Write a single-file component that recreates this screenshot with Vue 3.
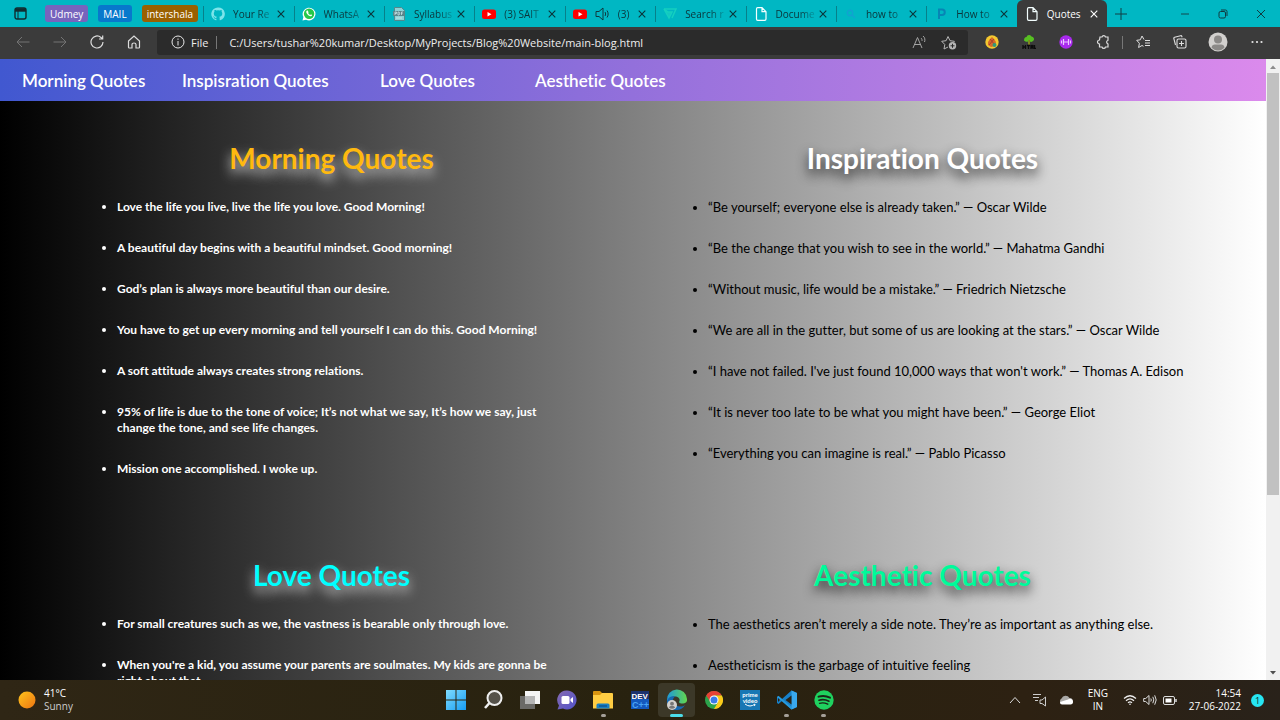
<script setup>
import { ref } from 'vue'

const tabs = [
  { icon: 'github', label: 'Your Re' },
  { icon: 'whatsapp', label: 'WhatsA' },
  { icon: 'pdf', label: 'Syllabus' },
  { icon: 'youtube', label: '(3) SAIT' },
  { icon: 'youtube', label: '(3)', sound: true },
  { icon: 'vee', label: 'Search r' },
  { icon: 'doc', label: 'Docume' },
  { icon: 'search', label: 'how to' },
  { icon: 'p', label: 'How to' },
  { icon: 'doc', label: 'Quotes', active: true }
]

const groups = [
  { label: 'Udmey', cls: 'violet' },
  { label: 'MAIL', cls: 'blue' },
  { label: 'intershala', cls: 'brown' }
]

const address = ref('C:/Users/tushar%20kumar/Desktop/MyProjects/Blog%20Website/main-blog.html')

const sections = [
  {
    id: 'morning', title: 'Morning Quotes', side: 'left',
    quotes: [
      'Love the life you live, live the life you love. Good Morning!',
      'A beautiful day begins with a beautiful mindset. Good morning!',
      'God’s plan is always more beautiful than our desire.',
      'You have to get up every morning and tell yourself I can do this. Good Morning!',
      'A soft attitude always creates strong relations.',
      '95% of life is due to the tone of voice; It’s not what we say, It’s how we say, just change the tone, and see life changes.',
      'Mission one accomplished. I woke up.'
    ]
  },
  {
    id: 'inspiration', title: 'Inspiration Quotes', side: 'right',
    quotes: [
      '“Be yourself; everyone else is already taken.” ― Oscar Wilde',
      '“Be the change that you wish to see in the world.” ― Mahatma Gandhi',
      '“Without music, life would be a mistake.” ― Friedrich Nietzsche',
      '“We are all in the gutter, but some of us are looking at the stars.” ― Oscar Wilde',
      "“I have not failed. I've just found 10,000 ways that won't work.” ― Thomas A. Edison",
      '“It is never too late to be what you might have been.” ― George Eliot',
      '“Everything you can imagine is real.” ― Pablo Picasso'
    ]
  },
  {
    id: 'love', title: 'Love Quotes', side: 'left',
    quotes: [
      'For small creatures such as we, the vastness is bearable only through love.',
      "When you're a kid, you assume your parents are soulmates. My kids are gonna be right about that."
    ]
  },
  {
    id: 'aesthetic', title: 'Aesthetic Quotes', side: 'right',
    quotes: [
      'The aesthetics aren’t merely a side note. They’re as important as anything else.',
      'Aestheticism is the garbage of intuitive feeling'
    ]
  }
]
</script>

<template>
  <div class="window">
    <header class="tabstrip">
      <button class="plain workspace" aria-label="Tab actions">
        <svg width="13" height="13" viewBox="0 0 13 13" fill="none" stroke="#102c30"><rect x="1" y="1" width="11" height="11" rx="2" stroke-width="1.4" /><path d="M1 3h11" stroke-width="3.4" /><path d="M4 4v8" stroke-width="1" /></svg>
      </button>
      <div class="groups">
        <button v-for="g in groups" :key="g.label" class="group" :class="g.cls">{{ g.label }}</button>
      </div>
      <div class="tabs">
        <div v-for="(t, i) in tabs" :key="i" class="tab" :class="{ active: t.active }">
          <button class="plain tab-main">
            <svg class="fav" viewBox="0 0 14 14" width="14" height="14" fill="none">
              <path v-if="t.icon === 'github'" fill="#7de4ea" d="M7 .4a6.6 6.6 0 0 0-2.1 12.9c.4 0 .5-.2.5-.4v-1.2c-1.8.4-2.2-.8-2.2-.8-.3-.8-.8-1-.8-1-.6-.4 0-.4 0-.4.7 0 1 .7 1 .7.6 1 1.600.7 2 .5 0-.4.2-.7.400-.9-1.500-.2-3-.7-3-3.300 0-.7.3-1.300.700-1.800-.1-.2-.3-.9.1-1.800 0 0 .5-.2 1.800.7a6 6 0 0 1 3.300 0c1.200-.9 1.800-.7 1.800-.7.4.9.100 1.600.1 1.800.4.500.7 1.100.7 1.800 0 2.600-1.600 3.100-3 3.300.200.200.400.600.400 1.200v1.900c0 .2.100.4.500.400A6.600 6.600 0 0 0 7 .4z" />
              <template v-else-if="t.icon === 'whatsapp'">
                <path d="M.5 13.500l.900-3.400A6.400 6.400 0 1 1 4 12.700z" fill="#fff" />
                <circle cx="7.100" cy="6.800" r="5.200" fill="#25c84a" />
                <path d="M4.700 3.800c-1 1-.3 2.500.900 3.800 1.300 1.400 2.800 2.200 4 1.300.9-.7.400-1-.2-1.300-.8-.400-.9-.2-1.300.3-.8-.2-1.600-1-2-1.800.600-.5.500-.7.200-1.400-.3-.8-.7-1.600-1.600-.9z" fill="#fff" />
              </template>
              <template v-else-if="t.icon === 'pdf'">
                <path d="M2.500.5h7l3 3v10h-10z" fill="#8ed1d5" stroke="#52898e" />
                <rect x="1" y="4" width="12" height="5" fill="#5b858a" />
                <path d="M3 8V5h1.500v1.500H3M6 5v3h1l.7-.7V5.700L7 5zM9.500 8V5H11M9.500 6.500h1M4 11h6" stroke="#d8eef0" stroke-width=".7" />
              </template>
              <template v-else-if="t.icon === 'youtube'">
                <rect y="2.500" width="14" height="9.500" rx="2.500" fill="#f00" /><path d="M5.500 5v4.500l4-2.250z" fill="#fff" />
              </template>
              <g v-else-if="t.icon === 'vee'" stroke="#14d0c0" stroke-width="1.500"><path d="M1 2h12L9 11" /><path d="M1 2l5 9 3-6H5z" fill="#14c6c2" /></g>
              <path v-else-if="t.icon === 'doc'" d="M2.500 2c0-.8.400-1.300 1.200-1.300H8l4 4V12c0 .8-.5 1.300-1.300 1.300h-7c-.8 0-1.200-.5-1.200-1.300zM8 .7v4h4" stroke="#f4ffff" stroke-width="1.200" />
              <g v-else-if="t.icon === 'search'" stroke="#12a2d0" stroke-width="1.400"><circle cx="6" cy="6" r="2.700" /><path d="M8 8l3 3" /></g>
              <path v-else d="M5 12V2.500h3a2.500 2.500 0 0 1 0 5.500H5" stroke="#0785b5" stroke-width="2" />
            </svg>
            <svg v-if="t.sound" class="sound" width="15" height="14" viewBox="0 0 15 14" fill="none" stroke="#10383d"><path d="M1 4.500h3L8 1v12L4 9.500H1zM10 5c.8 1 .8 3 0 4M12 3.500c1.500 2 1.500 5 0 7" /></svg>
            <span class="tab-label">{{ t.label }}</span>
          </button>
          <button class="plain close" aria-label="Close tab">
            <svg width="8" height="8" viewBox="0 0 8 8" stroke="currentColor"><path d="M.7.7l6.600 6.600M7.300.7L.7 7.300" stroke-width="1.100" /></svg>
          </button>
        </div>
      </div>
      <button class="plain newtab" aria-label="New tab">
        <svg width="12" height="12" viewBox="0 0 12 12" stroke="#103f45"><path d="M6 0v12M0 6h12" /></svg>
      </button>
      <div class="wincontrols">
        <button class="plain" aria-label="Minimize"><svg width="10" height="10" viewBox="0 0 10 10" stroke="#12474d"><path d="M1 5h8" /></svg></button>
        <button class="plain" aria-label="Restore"><svg width="10" height="10" viewBox="0 0 10 10" fill="none" stroke="#103b40"><rect x="1" y="2.500" width="6.500" height="6.500" rx="1.500" /><path d="M3 1h4.500Q9 1 9 2.500V7" /></svg></button>
        <button class="plain" aria-label="Close"><svg width="10" height="10" viewBox="0 0 10 10" stroke="#103b40"><path d="M1 1l8 8M9 1L1 9" /></svg></button>
      </div>
    </header>

    <div class="toolbar">
      <button class="plain tool" aria-label="Back"><svg width="14" height="12" viewBox="0 0 14 12" fill="none" stroke="#747474"><path d="M13.500 6H1M6 1L1 6l5 5" /></svg></button>
      <button class="plain tool" aria-label="Forward"><svg width="14" height="12" viewBox="0 0 14 12" fill="none" stroke="#747474"><path d="M.5 6H13M8 1l5 5-5 5" /></svg></button>
      <button class="plain tool" aria-label="Refresh"><svg width="14" height="14" viewBox="0 0 14 14" fill="none" stroke="#ddd" stroke-width="1.200"><path d="M13 7a6 6 0 1 1-2-4.500L12.500 4M12.700.5V4H9" /></svg></button>
      <button class="plain tool" aria-label="Home"><svg width="14" height="14" viewBox="0 0 14 14" fill="none" stroke="#ddd" stroke-width="1.200"><path d="M1.500 6L7 1l5.500 5v6.200q0 .8-.8.800H9V9.500Q9 8 7 8T5 9.500V13H2.300q-.8 0-.8-.8z" /></svg></button>
      <div class="address">
        <svg width="14" height="14" viewBox="0 0 14 14" fill="none" stroke="#e8e8e8"><circle cx="7" cy="7" r="6" /><path d="M7 6v4.500M7 3.500v1.300" /></svg>
        <label for="url">File</label>
        <span class="bar"></span>
        <input id="url" v-model="address" type="text" spellcheck="false" />
        <button class="plain" aria-label="Read aloud"><svg width="14" height="14" viewBox="0 0 14 14" fill="none" stroke="#a4a4a4"><path d="M1 13L5.500 2.500 10 13M2.500 9.500h6M9 3c1 1 1.200 2 1 3M11 1c2 1.500 2.300 4 1.500 6" /></svg></button>
        <button class="plain" aria-label="Add to favourites"><svg width="16" height="15" viewBox="0 0 16 15" fill="none" stroke="#b5b5b5"><path d="M7 12l-4 2 .8-4.500L.7 6.300l4.400-.6L7 1.500l2 4.200 4.400.6-1 1" /><circle cx="11.500" cy="10.800" r="3.700" fill="#b5b5b5" stroke="none" /><path d="M11.500 8.800v4M9.500 10.800h4" stroke="#2b2b2b" /></svg></button>
      </div>
      <button class="plain tool" aria-label="Fruit extension"><svg width="14" height="14" viewBox="0 0 14 14"><circle cx="7" cy="7" r="6.700" fill="#f5c82f" /><path d="M7 2l2 2 2 3-1 4-4 1-3-2V7l2-3z" fill="#d46a2c" /><path d="M5 4l5 6M9 4l-5 6" stroke="#a83d2c" /><circle cx="9.500" cy="10" r="2" fill="#2e9a7b" /></svg></button>
      <button class="plain tool" aria-label="HTML tree"><svg width="14" height="14" viewBox="0 0 14 14"><path d="M7 0a2.600 2.600 0 0 1 2.500 1.500 2.500 2.500 0 0 1 1.500 4.500Q9 7.500 8 6.500v3H6v-3Q4 7.500 2 5.500 2 2 4.500 2 5 0 7 0z" fill="#57bf22" /><path d="M6.500 5h1.200v5H6.500z" fill="#9a6425" /><path d="M1 10v4M3.500 10v4M1 12h2.500M5 10.500h3M6.500 10v4M9 14v-4l1 2 1-2v4M12.500 10v3.500H14" stroke="#0c0c0c" fill="none" stroke-width="1.300" /></svg></button>
      <button class="plain tool" aria-label="Purple extension"><svg width="14" height="14" viewBox="0 0 14 14" fill="none"><circle cx="7" cy="7" r="6.700" fill="#a829ed" /><path d="M4.500 4v6M9.500 4v6M4.500 7h5M2.500 5.500v3M11.500 5.500v3" stroke="#ecc6ff" stroke-width="1.200" /></svg></button>
      <button class="plain tool" aria-label="Extensions"><svg width="14" height="14" viewBox="0 0 14 14" fill="none" stroke="#dedede" stroke-width="1.200"><path d="M4 2h2a1.800 1.800 0 0 1 3.500 0H12v3.200a2 2 0 0 0 0 3.800v3H9.500a1.800 1.800 0 0 1-3.500 0H3.500V9a2 2 0 0 1 0-4z" /></svg></button>
      <span class="bar split"></span>
      <button class="plain tool" aria-label="Favourites"><svg width="14" height="14" viewBox="0 0 14 14" fill="none" stroke="#dedede"><path d="M8 4.500L6 1 4.300 4.800.7 5.300l2.700 3-.8 4.200L6 10.500l1.500.8M9 5.500h5M9 8h5M9 10.500h5" /></svg></button>
      <button class="plain tool" aria-label="Collections"><svg width="14" height="14" viewBox="0 0 14 14" fill="none" stroke="#dedede" stroke-width="1.100"><rect x="4" y="4" width="9" height="9" rx="1.500" /><path d="M8.500 6v5M6 8.500h5M2.500 10L.8 3.500q-.2-1 .8-1.300l6-1.500q1-.2 1.300.8l.3.800" /></svg></button>
      <button class="plain tool wide" aria-label="Profile"><svg width="20" height="20" viewBox="0 0 20 20"><circle cx="10" cy="10" r="9.500" fill="#d2d0ce" /><circle cx="10" cy="7.500" r="4" fill="#8b8987" /><path d="M3.500 15.500Q4 12.500 7 12.500h6q3 0 3.500 3Q14 18.500 10 18.500t-6.500-3z" fill="#8b8987" /></svg></button>
      <button class="plain tool wide" aria-label="Settings and more"><svg width="12" height="4" viewBox="0 0 12 4" fill="#e5e5e5"><circle cx="1.500" cy="2" r="1.100" /><circle cx="6" cy="2" r="1.100" /><circle cx="10.500" cy="2" r="1.100" /></svg></button>
    </div>

    <div class="viewport">
      <div class="page">
        <nav class="menu">
          <a href="#morning">Morning Quotes</a>
          <a href="#inspiration">Inspisration Quotes</a>
          <a href="#love">Love Quotes</a>
          <a href="#aesthetic">Aesthetic Quotes</a>
        </nav>
        <main class="quotes">
          <section v-for="s in sections" :id="s.id" :key="s.id" :class="[s.side, s.id]">
            <h1>{{ s.title }}</h1>
            <ul>
              <li v-for="q in s.quotes" :key="q">{{ q }}</li>
            </ul>
          </section>
        </main>
      </div>
      <div class="scrollbar">
        <svg width="6" height="4" viewBox="0 0 6 4"><path d="M0 4l3-3.500L6 4z" fill="#8c8c8c" /></svg>
        <div class="track"><div class="thumb"></div></div>
        <svg width="6" height="4" viewBox="0 0 6 4"><path d="M0 0l3 3.500L6 0z" fill="#505050" /></svg>
      </div>
    </div>

    <footer class="taskbar">
      <button class="plain weather">
        <svg width="18" height="18" viewBox="0 0 18 18"><defs><linearGradient id="sun" x1="0" y1="0" x2="1" y2="1"><stop offset="0" stop-color="#ffc51c" /><stop offset="1" stop-color="#ee7412" /></linearGradient></defs><circle cx="9" cy="9" r="8.500" fill="url(#sun)" /></svg>
        <span>41°C<br /><em>Sunny</em></span>
      </button>
      <div class="apps">
        <button class="plain" aria-label="Start"><svg width="20" height="20" viewBox="0 0 20 20"><defs><linearGradient id="win" x1="0" y1="0" x2="1" y2="1"><stop offset="0" stop-color="#7fdcff" /><stop offset="1" stop-color="#169cf4" /></linearGradient></defs><path d="M0 0h9.500v9.500H0zM10.500 0H20v9.500h-9.500zM0 10.500h9.500V20H0zM10.500 10.500H20V20h-9.500z" fill="url(#win)" /></svg></button>
        <button class="plain" aria-label="Search"><svg width="20" height="20" viewBox="0 0 20 20" fill="#55524a" stroke="#eee" stroke-width="2"><circle cx="11.500" cy="8" r="7" /><path d="M6.500 13L2 18" stroke-width="2.600" /></svg></button>
        <button class="plain" aria-label="Task view"><svg width="20" height="20" viewBox="0 0 20 20"><path d="M5 1h15v13H5z" fill="#f4f4f4" /><path d="M0 6h15v13H0z" fill="#777" fill-opacity=".85" /><path d="M5 6h10v8H5z" fill="#b5b5b5" /></svg></button>
        <button class="plain" aria-label="Chat"><svg width="20" height="20" viewBox="0 0 20 20"><defs><linearGradient id="chat" x1="0" y1="0" x2="1" y2="1"><stop stop-color="#866bb0" /><stop offset="1" stop-color="#5152ca" /></linearGradient></defs><path d="M10 .5A9.500 9.500 0 1 1 6 18.600L.5 19.500l1.500-4A9.500 9.500 0 0 1 10 .5z" fill="url(#chat)" /><rect x="4.500" y="6" width="8" height="8" rx="1.500" fill="#fff" /><path d="M13.500 9l2.500-2v6l-2.500-2z" fill="#fff" /></svg></button>
        <button class="plain running" aria-label="File Explorer"><svg width="20" height="20" viewBox="0 0 20 20"><path d="M0 2q0-1 1-1h6l2 2v4H0z" fill="#d99511" /><path d="M0 5h7l2-2h10q1 0 1 1v14.500H0z" fill="#ffcd43" /><path d="M3.500 18.500V15q0-1.500 1.500-1.500h10q1.500 0 1.500 1.500v3.500z" fill="#197fc3" /><path d="M6 16h8" stroke="#0d5793" stroke-width="1.500" /></svg></button>
        <button class="plain" aria-label="Dev-C++"><svg width="20" height="20" viewBox="0 0 20 20"><rect x="1" y="1" width="18" height="18" fill="#1458bc" /><path d="M1 1h18v8H1z" fill="#1b326e" /><g font-family="Liberation Sans" font-weight="bold" fill="#fff"><text x="1.500" y="8.500" font-size="8">DEV</text><text x="2" y="17.500" font-size="9" fill="#48a3f4">C++</text></g></svg></button>
        <button class="plain current" aria-label="Edge"><svg width="22" height="22" viewBox="0 0 22 22"><defs><linearGradient id="edge"><stop stop-color="#1d99dc" /><stop offset="1" stop-color="#63d84d" /></linearGradient></defs><path d="M1 11a10 10 0 0 1 20-1c.5 4-3 5-6 4.500-2-.3-2.500-1.500-1.500-2.500C14.500 9 11 7 8 7.500 4 8 2 11 1 14z" fill="url(#edge)" /><path d="M1 12c1-4 5-5.500 8-4.500-3 2-3 7 1 9s7 1 9-.5C17 20 13 21.500 9.500 21 4 20.500.5 16 1 12z" fill="#1768b1" /><circle cx="6" cy="16" r="5" fill="#d4d0cc" /><circle cx="6" cy="14.700" r="1.900" fill="#777" /><path d="M2.800 18.500q.5-1.800 3.200-1.800t3.200 1.800Q6 21 2.800 18.500z" fill="#777" /></svg></button>
        <button class="plain" aria-label="Chrome"><svg width="18" height="18" viewBox="0 0 18 18"><circle cx="9" cy="9" r="9" fill="#2ca34b" /><path d="M1.200 4.500A9 9 0 0 1 16.800 4.500H9L5.500 11z" fill="#e64235" /><path d="M16.800 4.500A9 9 0 0 1 9 18L13 11.300 9 4.500z" fill="#fcc919" /><circle cx="9" cy="9" r="4.500" fill="#fff" /><circle cx="9" cy="9" r="3.500" fill="#397bea" /></svg></button>
        <button class="plain" aria-label="Prime Video"><svg width="20" height="20" viewBox="0 0 20 20"><rect width="20" height="20" fill="#1877b4" /><g font-family="Lato" font-weight="bold" font-size="6" fill="#fff" text-anchor="middle"><text x="10" y="7">prime</text><text x="10" y="12.500">video</text></g><path d="M5 14q5 4 10 0l-.5 2" fill="none" stroke="#fff" /></svg></button>
        <button class="plain running" aria-label="Visual Studio Code"><svg width="20" height="20" viewBox="0 0 20 20"><path d="M14.500.5L20 3v14l-5.500 2.500L5 11l-3.500 3L0 13V7l1.500-1L5 9z" fill="#1780c9" /><path d="M1.500 6L14.500 17V19.500L0 7z" fill="#289bdd" /><path d="M14.500.5L20 3v14l-5.500 2.500z" fill="#39a8ee" /><path d="M14.500 5.500v9L8.500 10zM1 8v4l2-2z" fill="#2a2316" /></svg></button>
        <button class="plain running" aria-label="Spotify"><svg width="20" height="20" viewBox="0 0 20 20" fill="none" stroke="#1b2518" stroke-linecap="round"><circle cx="10" cy="10" r="9.700" fill="#1fd15f" stroke="none" /><path d="M4.500 6.700q6-1.800 11.500 1" stroke-width="1.900" /><path d="M5 10.200q5-1.500 10 1" stroke-width="1.600" /><path d="M5.500 13.300q4-1.200 8.300.9" stroke-width="1.300" /></svg></button>
      </div>
      <div class="tray">
        <button class="plain" aria-label="Show hidden icons"><svg width="12" height="8" viewBox="0 0 12 8" fill="none" stroke="#ddd"><path d="M1 7l5-5.500L11 7" /></svg></button>
        <button class="plain" aria-label="Audio list"><svg width="14" height="14" viewBox="0 0 14 14" fill="none" stroke="#ccc"><path d="M0 1.500h8M0 4.500h6M2 7.500h3M7 7h2l3.500-3v9L9 10.500H7z" /></svg></button>
        <button class="plain" aria-label="OneDrive"><svg width="14" height="10" viewBox="0 0 14 10"><path d="M3 9a3 3 0 0 1-.5-5.500A4.500 4.500 0 0 1 10.500 3 3 3 0 0 1 11 9z" fill="#aaa9a7" /><path d="M1 7l8-2.500a3 3 0 0 1 5 2.300Q14 9.500 11.500 9.500H3Q1 9.500 1 7z" fill="#fff" /></svg></button>
        <button class="plain lang">ENG<br />IN</button>
        <button class="plain status" aria-label="Network, volume, battery">
          <svg width="14" height="12" viewBox="0 0 14 12" fill="none" stroke="#eee"><path d="M1 4.500q6-5.500 12 0M3 6.700q4-3.700 8 0M5 8.800q2-2 4 0" stroke-width="1.200" /><circle cx="7" cy="10.300" r=".8" fill="#eee" stroke="none" /></svg>
          <svg width="14" height="12" viewBox="0 0 14 12" fill="none" stroke="#ddd"><path d="M.7 4.500h2L6 1.500v9l-3.300-3h-2zM7.800 4.500q1 1.500 0 3M9.800 2.800q2 3 0 6.400M11.700 1.300q3 4.600 0 9.400" /></svg>
          <svg width="14" height="9" viewBox="0 0 14 9" fill="none" stroke="#ddd"><rect x=".5" y=".5" width="11" height="8" rx="1.500" /><path d="M2.500 2.500h6v4h-6z" fill="#fff" stroke="none" /><path d="M13 3v3" stroke-width="1.500" /></svg>
        </button>
        <button class="plain clock">14:54<br />27-06-2022</button>
        <button class="plain count">1</button>
      </div>
    </footer>
  </div>
</template>

<style>
body {
  margin: 0;
  overflow: hidden;
}
</style>

<style scoped>
.window {
  display: flex;
  flex-direction: column;
  height: 100vh;
  overflow: hidden;
  font-family: "Open Sans", "Noto Sans", sans-serif;
  font-size: 10px;
}

.plain {
  display: flex;
  align-items: center;
  justify-content: center;
  margin: 0;
  padding: 0;
  border: 0;
  background: none;
  color: inherit;
  font: inherit;
}

svg {
  display: block;
  flex: none;
}

.tabstrip {
  display: flex;
  flex: none;
  height: 27px;
  background: #00b7c3;
  color: #0b3439;
}

.workspace {
  width: 40px;
}

.groups {
  display: flex;
  align-items: center;
  gap: 10px;
  padding: 0 5px;
}

.group {
  height: 17px;
  padding: 0 5px;
  border: 0;
  border-radius: 3px;
  color: #fff;
  font-family: "Open Sans", sans-serif;
  font-size: 10px;
  line-height: 16px;
}

.violet { background: #7764bd; }
.blue { background: #0878cc; }
.brown { background: #9a6000; }

.tabs {
  display: flex;
  flex: 0 1 904px;
  min-width: 0;
}

.tab {
  position: relative;
  display: flex;
  flex: 1;
  align-items: center;
  min-width: 0;
  padding: 0 6px 0 8px;
}

.tab::before {
  position: absolute;
  left: 0;
  width: 1px;
  height: 16px;
  background: #07808a;
  content: "";
}

.tab-main {
  flex: 1;
  justify-content: flex-start;
  gap: 8px;
  min-width: 0;
}

.tab-label {
  flex: 1;
  text-align: left;
  white-space: nowrap;
  mask-image: linear-gradient(to right, #000 60%, rgba(0, 0, 0, 0.15));
}

.close {
  width: 14px;
  height: 18px;
}

.tab.active {
  border-radius: 6px 6px 0 0;
  background: #3b3b3b;
  color: #fff;
}

.tab.active::before {
  display: none;
}

.tab.active .tab-label {
  mask-image: none;
}

.newtab {
  width: 28px;
}

.wincontrols {
  display: flex;
  margin-left: auto;
}

.wincontrols button {
  width: 38px;
}

.toolbar {
  display: flex;
  flex: none;
  align-items: center;
  box-sizing: border-box;
  height: 32px;
  padding: 0 4px 2px;
  background: #3b3b3b;
  color: #eee;
}

.tool {
  width: 37px;
  height: 30px;
}

.wide {
  width: 39px;
}

.bar {
  width: 1px;
  height: 13px;
  background: #777;
}

.split {
  margin: 0 1px;
}

.address {
  display: flex;
  flex: 1;
  align-items: center;
  height: 25px;
  margin: 0 5px;
  padding: 0 11px 0 14px;
  border-radius: 3px;
  background: #2b2b2b;
  font-size: 11px;
}

.address label {
  margin: 0 8px 0 6px;
}

.address input {
  flex: 1;
  min-width: 0;
  margin-left: 12px;
  padding: 0;
  border: 0;
  outline: 0;
  background: none;
  color: #eee;
  font: inherit;
}

.address button {
  margin-left: 15px;
}

.viewport {
  display: flex;
  flex: 1;
  min-height: 0;
}

.page {
  flex: 1;
  overflow: hidden;
  background: linear-gradient(to right, #000, #808080 50%, #fff);
  font-family: Lato, "Open Sans", sans-serif;
  font-variant-ligatures: none;
}

.menu {
  display: grid;
  grid-template-columns: 160px 198px 155px auto;
  align-items: center;
  height: 42px;
  padding-left: 22px;
  background: linear-gradient(to right, #4158d0, #9370db 50%, #db8aec);
}

.menu a {
  color: #fff;
  font-size: 17px;
  font-weight: 600;
  text-decoration: none;
  white-space: nowrap;
}

.quotes {
  display: grid;
  grid-template-columns: minmax(0, 1fr) minmax(0, 1fr);
  gap: 57px 82px;
  padding: 41px 89px 0 77px;
}

h1 {
  margin: 0 0 25px;
  font-size: 28px;
  font-weight: 700;
  line-height: 32px;
  text-align: center;
}

.left h1 { text-shadow: 0 6px 12px #d3d3d3; }
.right h1 { text-shadow: 0 6px 12px #222; }
.morning h1 { color: #ffb90f; }
.inspiration h1 { color: #fff; }
.love h1 { color: #0ff; }
.aesthetic h1 { color: #00fa9a; }

ul {
  margin: 0;
  padding: 0 0 0 40px;
}

li {
  margin-bottom: 25px;
  font-size: 13px;
  line-height: 16px;
}

.left ul {
  padding-right: 20px;
}

.left li {
  color: #fff;
  font-size: 12px;
  font-weight: 700;
}

.right li {
  color: #000;
  white-space: nowrap;
}

.scrollbar {
  display: flex;
  flex: none;
  flex-direction: column;
  align-items: center;
  width: 14px;
  padding: 6px 0 5px;
  box-sizing: border-box;
  background: #f1f1f1;
}

.track {
  flex: 1;
  width: 12px;
  margin: 4px 0;
}

.thumb {
  height: 71%;
  background: #c1c1c1;
}

.taskbar {
  display: grid;
  flex: none;
  grid-template-columns: 1fr 404px 1fr;
  height: 40px;
  background: linear-gradient(to right, #2f2615, #28220f 50%, #2d2112 80%, #29221a);
  color: #fff;
}

.weather {
  justify-self: start;
  gap: 8px;
  padding-left: 18px;
  line-height: 13px;
  text-align: left;
}

.weather em {
  color: #ccc;
  font-style: normal;
}

.apps {
  display: flex;
  align-items: center;
}

.apps button {
  position: relative;
  flex: 1;
  height: 34px;
}

.current {
  border-radius: 4px;
  background: #3c3828;
}

.running::after,
.current::after {
  position: absolute;
  bottom: 0;
  width: 5px;
  height: 3px;
  border-radius: 2px;
  background: #a5a099;
  content: "";
}

.current::after {
  width: 13px;
  background: #4cddea;
}

.tray {
  display: flex;
  align-items: center;
  justify-content: flex-end;
  gap: 12px;
  padding-right: 16px;
  line-height: 13px;
}

.lang {
  width: 26px;
}

.status {
  gap: 6px;
}

.clock {
  text-align: right;
}

.count {
  width: 13px;
  height: 13px;
  margin-left: -2px;
  border-radius: 50%;
  background: #27e5f2;
  color: #102b2d;
  font-size: 9px;
}
</style>
